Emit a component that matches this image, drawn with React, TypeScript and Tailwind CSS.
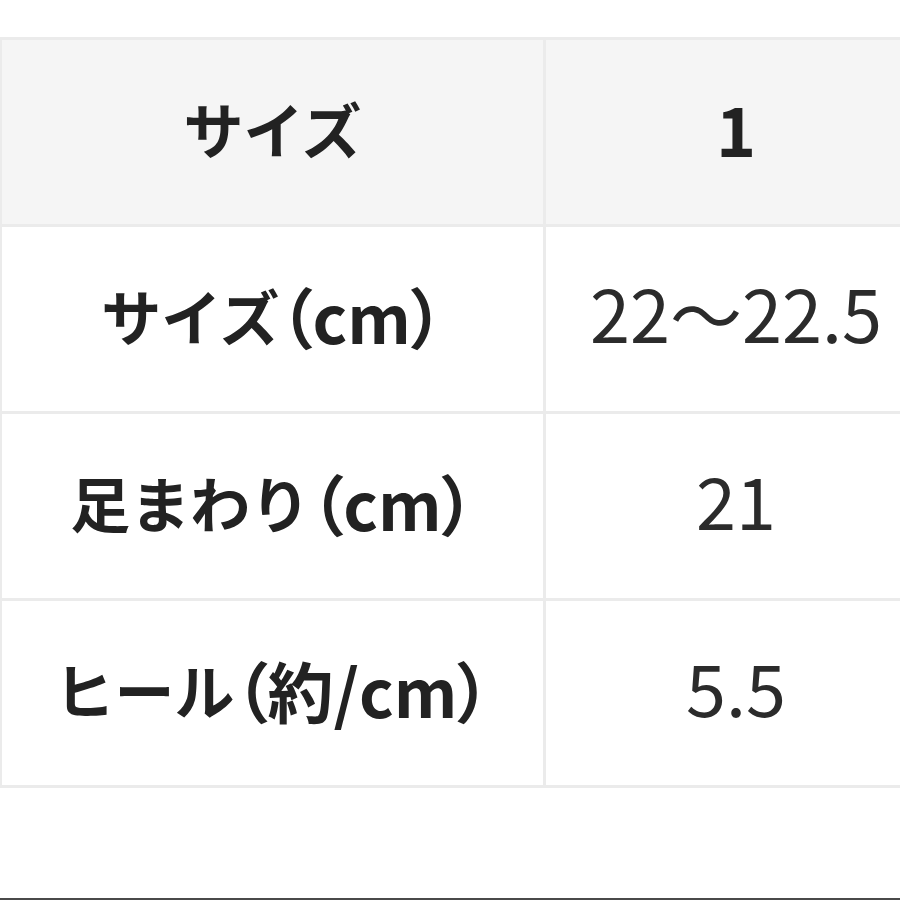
import React from "react";

const rows = [
  { label: "サイズ", unit: "（cm）", value: "22～22.5" },
  { label: "足まわり", unit: "（cm）", value: "21" },
  { label: "ヒール", unit: "（約/cm）", value: "5.5" },
];

const font = {
  fontFamily: '"Noto Sans CJK JP", "Noto Sans", sans-serif',
};

export default function App() {
  return (
    <div
      className="w-[900px] h-[900px] overflow-hidden bg-white flex flex-col"
      style={font}
    >
      <div className="pt-[37px] flex-1">
        {/* Size table */}
        <div className="w-[930px] grid grid-cols-[541px_380px] gap-[3px] p-[3px] pl-[2px] bg-[#ebebeb]">
          <div className="h-[184px] pb-[8px] bg-[#f5f5f5] flex items-center justify-center text-[60px] font-bold text-[#222]">
            サイズ
          </div>
          <div className="h-[184px] pb-[8px] bg-[#f5f5f5] flex items-center justify-center text-[68px] font-bold text-[#222]">
            1
          </div>
          {rows.map((r) => (
            <React.Fragment key={r.label}>
              <div className="h-[184px] pb-[8px] bg-white flex items-center justify-center text-[60px] font-bold text-[#222] whitespace-nowrap">
                <span>{r.label}</span>
                <span className="text-[66px] [font-feature-settings:'palt']">
                  {r.unit}
                </span>
              </div>
              <div className="h-[184px] pb-[14px] bg-white flex items-center justify-center text-[72px] text-[#2b2b2b] whitespace-nowrap">
                {r.value}
              </div>
            </React.Fragment>
          ))}
        </div>
      </div>
      <div className="h-[2px] bg-[#4a4a4a]" />
    </div>
  );
}
